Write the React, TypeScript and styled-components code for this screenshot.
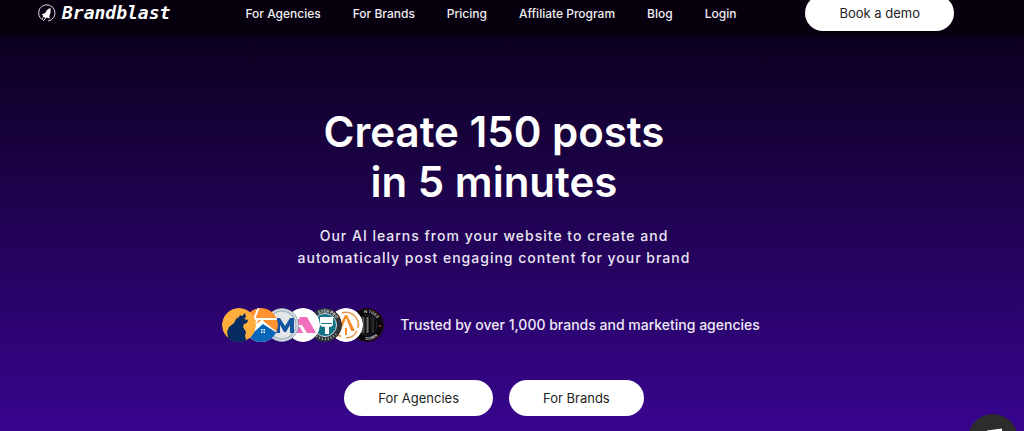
import React from "react";
import styled, { createGlobalStyle } from "styled-components";

const GlobalStyle = createGlobalStyle`
  * { box-sizing: border-box; }
  body { margin: 0; background: #37058c; font-family: Inter, "Liberation Sans", sans-serif; }
`;

const Page = styled.div`
  min-height: 100vh;
  overflow: hidden;
  color: #fff;
  background: linear-gradient(180deg, #08001a 0, #0c001f 36px, #38058f 100%);
`;

const Header = styled.header`
  display: flex;
  align-items: center;
  justify-content: space-between;
  height: 46px;
  margin-top: -10px;
  padding: 0 70px 0 38px;
  background: #06000e;
`;

const Logo = styled.a`
  display: flex;
  align-items: center;
  gap: 6px;
  color: #fff;
  text-decoration: none;
  font: italic 700 18px/24px "DejaVu Sans Mono", monospace;
`;

const Nav = styled.nav`
  display: flex;
  gap: 32px;
  padding: 2px 0 0 6px;
`;

const NavLink = styled.a`
  color: #f0eff2;
  font-size: 12px;
  line-height: 18px;
  font-weight: 500;
  text-decoration: none;
  white-space: nowrap;
`;

const PillButton = styled.button`
  height: 36px;
  padding: 0 34px;
  border: 0;
  border-radius: 18px;
  background: #fff;
  color: #222;
  font-family: inherit;
  font-size: 13px;
  line-height: 20px;
  white-space: nowrap;
`;

const Hero = styled.main`
  display: flex;
  flex-direction: column;
  align-items: center;
  padding: 71px 36px 15px 0;
  text-align: center;
`;

const Title = styled.h1`
  margin: 0;
  font-size: 42px;
  line-height: 50px;
  font-weight: 600;
`;

const Lead = styled.p`
  margin: 18px 0 0;
  color: #eae6f1;
  font-size: 14px;
  line-height: 22px;
  font-weight: 500;
  letter-spacing: 1px;
`;

const Trust = styled.div`
  display: flex;
  align-items: center;
  gap: 16px;
  margin-top: 39px;
  padding-right: 6px;
`;

const TrustText = styled.p`
  margin: 0;
  color: #eeeaf5;
  font-size: 14px;
  line-height: 22px;
  font-weight: 500;
`;

const Actions = styled.div`
  display: flex;
  gap: 16px;
  margin-top: 38px;
`;

const ChatButton = styled.button`
  position: fixed;
  right: 6px;
  bottom: -33px;
  width: 50px;
  height: 50px;
  padding: 0;
  border: 0;
  border-radius: 50%;
  background: #2c2c2c;
`;

const links = ["For Agencies", "For Brands", "Pricing", "Affiliate Program", "Blog", "Login"];
const badgeCenters = [17, 39, 60, 81, 103, 124, 145];

function RocketMark() {
  return (
    <svg width="18" height="18" viewBox="0 0 18 18" aria-hidden="true">
      <path d="M3 14.8A8.2 8.2 0 1 1 10 17.1" fill="none" stroke="#dcd9e2" strokeWidth="1" />
      <path d="M12.4 4C10 4.8 8.3 6.5 7.2 9L3.6 10.4l1.6 1-.5 1.4 1.9.4.6 1.6 1.7-1.2 2.7 1.1-.2-3.1C12.6 9.7 13 7 12.4 4Z" fill="#fff" />
      <path d="M5 13.4l-1.2 2.5M7 14.6l-1.4 2.2" stroke="#fff" strokeWidth="1" />
    </svg>
  );
}

function BrandBadges() {
  return (
    <svg width="162" height="34" viewBox="0 0 162 34" role="img" aria-label="Customer brands">
      <defs>
        {badgeCenters.map((cx, i) => (
          <clipPath key={cx} id={`badge${i}`}><circle cx={cx} cy="17" r="17" /></clipPath>
        ))}
        <linearGradient id="bars">
          <stop offset="0" stopColor="#080808" /><stop offset=".3" stopColor="#555" />
          <stop offset=".42" stopColor="#080808" /><stop offset=".58" stopColor="#777" />
          <stop offset=".7" stopColor="#080808" /><stop offset="1" stopColor="#333" />
        </linearGradient>
        <path id="paintArc" d="M90.5 17a12.5 12.5 0 0 1 25 0" />
        <path id="darkArc" d="M133 17a12 12 0 0 1 24 0" />
        <path id="darkArcLow" d="M130 17a15 15 0 0 0 30 0" />
      </defs>
      <g clipPath="url(#badge6)">
        <circle cx="145" cy="17" r="17" fill="#090709" />
        <rect x="137" y="9" width="15" height="16" fill="url(#bars)" />
        <circle cx="145" cy="17" r="10" fill="none" stroke="#2c292c" />
        <circle cx="145" cy="17" r="16.4" fill="none" stroke="#311018" />
        <g fill="#c9c5ca" fontSize="4" fontWeight="700" fontFamily="Inter, sans-serif">
          <text><textPath href="#darkArc" startOffset="16">N TOES</textPath></text>
          <text><textPath href="#darkArcLow" startOffset="22">DOWN</textPath></text>
        </g>
        <circle cx="158" cy="18" r="1" fill="#ba3549" />
      </g>
      <g clipPath="url(#badge5)">
        <circle cx="124" cy="17" r="17" fill="#fff" />
        <path d="M119 28.5A12.5 12.5 0 0 1 116 7M120 5a12.5 12.5 0 0 1 16 15M135 23a12.5 12.5 0 0 1-11 7" fill="none" stroke="#eb9852" strokeWidth="1.6" />
        <path d="M115 23l8-16h2l8 16h-4l-5-11-5 11ZM123 27v-7h2v7" fill="#f68a24" />
        <path d="M119 24l5-13 5 13" fill="none" stroke="#fff" strokeWidth="1" />
      </g>
      <g clipPath="url(#badge4)">
        <circle cx="103" cy="17" r="17" fill="#303438" />
        <circle cx="103" cy="17" r="11.5" fill="#137184" stroke="#d4dfe1" />
        <path d="M98 9h13v7q0 3-4 3v7h-4v-7q-5 0-5-3Z" fill="#fff" />
        <path d="M99 15.5h11" stroke="#137184" strokeWidth="1" />
        <text fill="#dce1e4" fontSize="4" fontWeight="700" fontFamily="Inter, sans-serif">
          <textPath href="#paintArc" startOffset="13">STER PRO</textPath>
        </text>
        <path d="M92 26q12 10 22 0" fill="none" stroke="#bcc3c8" strokeWidth="2" strokeDasharray="1 2" />
      </g>
      <g clipPath="url(#badge3)">
        <circle cx="81" cy="17" r="17" fill="#fff" />
        <path d="M78 9h7l9 16h-9l-5-8h-7Z" fill="#f26dbb" />
        <path d="M74 19h4l3 6h-11Z" fill="#f26dbb" />
      </g>
      <g clipPath="url(#badge2)">
        <circle cx="60" cy="17" r="16.5" fill="#e3e5e7" stroke="#8999ad" />
        <circle cx="60" cy="17" r="14" fill="none" stroke="#a8b7c5" strokeWidth="1.5" />
        <path d="M54 25V10h4l5 8 5-8h4v15h-4v-8l-4 7h-2l-4-7v8Z" fill="#1254a0" />
      </g>
      <g clipPath="url(#badge1)">
        <circle cx="39" cy="17" r="17" fill="#ff922e" />
        <path d="M22 34l10-17 8-5 15 12v10Z" fill="#fff" />
        <path d="M37-1l-5 12h23M39 11l8 12M36 11l-8 12" fill="none" stroke="#fff" strokeWidth="2" />
        <path d="M41 16l14 9-6 9H26l5-9Z" fill="#0866b8" />
        <path d="M39 21h1.5v1.5H39zm2.5 0H43v1.5h-1.5zm-2.500 2.5h1.5V25H39zm2.5 0H43V25h-1.5z" fill="#fff" />
      </g>
      <g clipPath="url(#badge0)">
        <circle cx="17" cy="17" r="17" fill="#ffae3d" />
        <path d="M3 34l3-5-1-5 2-5 5-4 2-4 3-2 1-2 2 1 3-3 1 4-2 2 4 1-1 3-3 1-1 3 3 5-1 4 2 6Z" fill="#052b61" />
      </g>
    </svg>
  );
}

export default function App() {
  return (
    <Page>
      <GlobalStyle />
      <Header>
        <Logo href="#"><RocketMark />Brandblast</Logo>
        <Nav aria-label="Main">
          {links.map((label) => <NavLink href="#" key={label}>{label}</NavLink>)}
        </Nav>
        <PillButton type="button">Book a demo</PillButton>
      </Header>
      <Hero>
        <Title>Create 150 posts<br />in 5 minutes</Title>
        <Lead>Our AI learns from your website to create and<br />automatically post engaging content for your brand</Lead>
        <Trust>
          <BrandBadges />
          <TrustText>Trusted by over 1,000 brands and marketing agencies</TrustText>
        </Trust>
        <Actions>
          <PillButton type="button">For Agencies</PillButton>
          <PillButton type="button">For Brands</PillButton>
        </Actions>
      </Hero>
      <ChatButton type="button" aria-label="Open chat">
        <svg width="50" height="50" viewBox="0 0 50 50" aria-hidden="true">
          <path d="M19 16.5L34 14.5V30L25 34Z" fill="#fff" />
        </svg>
      </ChatButton>
    </Page>
  );
}
